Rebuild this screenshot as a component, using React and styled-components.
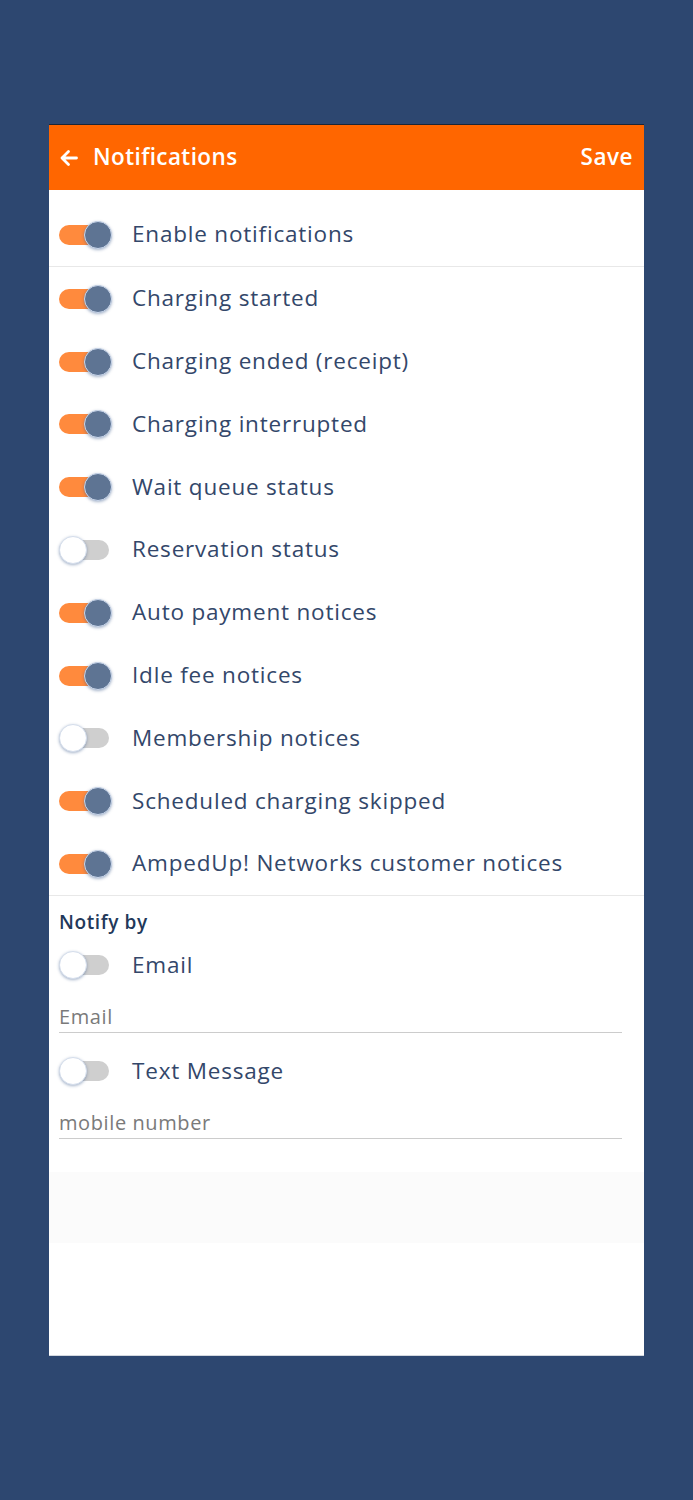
import React, { useState } from 'react';
import styled, { createGlobalStyle } from 'styled-components';

const GlobalStyle = createGlobalStyle`
  html, body {
    margin: 0;
    padding: 0;
    background: #2d4770;
  }
  body {
    font-family: "Open Sans", Lato, sans-serif;
  }
`;

const Page = styled.div`
  min-height: 1500px;
  padding-top: 124px;
  box-sizing: border-box;
`;

const Card = styled.div`
  margin-left: 49px;
  width: 595px;
  height: 1232px;
  background: #ffffff;
  border-top: 1px solid #1c2536;
  border-bottom: 1px solid #d3d8df;
  box-sizing: border-box;
  display: flex;
  flex-direction: column;
`;

const Header = styled.div`
  height: 65px;
  background: #ff6600;
  display: flex;
  align-items: center;
  justify-content: space-between;
  padding: 0 11px 0 10px;
  color: #ffffff;
`;

const TitleGroup = styled.div`
  display: flex;
  align-items: center;
  gap: 15px;
`;

const Title = styled.span`
  font-size: 22.5px;
  font-weight: 600;
  letter-spacing: 0.4px;
  line-height: 1;
`;

const SaveButton = styled.button`
  background: none;
  border: none;
  color: #ffffff;
  font-family: inherit;
  font-size: 22.5px;
  font-weight: 600;
  letter-spacing: 0.5px;
  line-height: 1;
  padding: 0;
  cursor: pointer;
`;

const List = styled.div`
  display: flex;
  flex-direction: column;
  padding-top: ${p => p.$top || 0}px;
  border-bottom: 1px solid #e8e8e8;
`;

const Row = styled.div`
  height: ${p => p.$h || 62.8}px;
  display: flex;
  align-items: center;
  gap: 20px;
  padding-left: 10px;
  margin-top: ${p => p.$mt || 0}px;
`;

const Label = styled.span`
  font-size: 22.5px;
  line-height: 1;
  color: #33476a;
  letter-spacing: 0.8px;
`;

const Track = styled.div`
  position: relative;
  width: 53px;
  height: 27px;
  flex-shrink: 0;
  cursor: pointer;

  &::before {
    content: '';
    position: absolute;
    left: 0;
    top: 4px;
    width: 50px;
    height: 20px;
    border-radius: 10px;
    background: ${p => (p.$on ? '#ff8a3d' : '#cfcfcf')};
  }
`;

const Thumb = styled.div`
  position: absolute;
  top: 0;
  left: ${p => (p.$on ? 25 : 0)}px;
  width: 26px;
  height: 26px;
  border-radius: 50%;
  background: ${p => (p.$on ? '#5e7493' : '#ffffff')};
  border: 1px solid ${p => (p.$on ? '#c9d6ea' : '#d5deec')};
  box-shadow: 0 1px 3px rgba(60, 90, 140, 0.45);
`;

const Section = styled.div`
  display: flex;
  flex-direction: column;
`;

const SectionTitle = styled.div`
  font-size: 19px;
  font-weight: 600;
  color: #22385a;
  letter-spacing: 0.6px;
  line-height: 24px;
  padding: 14px 0 0 10px;
`;

const Input = styled.input`
  margin-left: 10px;
  width: 563px;
  height: 37px;
  box-sizing: border-box;
  border: none;
  border-bottom: 1.5px solid #cccccc;
  padding: 6px 0 0;
  font-family: inherit;
  font-size: 20px;
  letter-spacing: 0.6px;
  color: #333;
  outline: none;
  background: transparent;

  &::placeholder {
    color: #7a7a7a;
  }
`;

const Footer = styled.div`
  margin-top: 33px;
  height: 71px;
  background: #fbfbfb;
`;

const Toggle = ({ on, onClick }) => (
  <Track $on={on} onClick={onClick}>
    <Thumb $on={on} />
  </Track>
);

const BackArrow = () => (
  <svg width="19" height="18" viewBox="0 0 19 18" fill="none">
    <path d="M17.5 9H3M9.5 2.5L3 9l6.5 6.5" stroke="#fff" strokeWidth="2.8" strokeLinecap="round" strokeLinejoin="round" />
  </svg>
);

const initialItems = [
  { label: 'Charging started', on: true },
  { label: 'Charging ended (receipt)', on: true },
  { label: 'Charging interrupted', on: true },
  { label: 'Wait queue status', on: true },
  { label: 'Reservation status', on: false },
  { label: 'Auto payment notices', on: true },
  { label: 'Idle fee notices', on: true },
  { label: 'Membership notices', on: false },
  { label: 'Scheduled charging skipped', on: true },
  { label: 'AmpedUp! Networks customer notices', on: true },
];

export default function App() {
  const [enabled, setEnabled] = useState(true);
  const [items, setItems] = useState(initialItems);
  const [email, setEmail] = useState(false);
  const [sms, setSms] = useState(false);

  const flip = i => setItems(items.map((it, j) => (j === i ? { ...it, on: !it.on } : it)));

  return (
    <Page>
      <GlobalStyle />
      <Card>
        <Header>
          <TitleGroup>
            <BackArrow />
            <Title>Notifications</Title>
          </TitleGroup>
          <SaveButton>Save</SaveButton>
        </Header>

        <List $top={12}>
          <Row $h={64}>
            <Toggle on={enabled} onClick={() => setEnabled(!enabled)} />
            <Label>Enable notifications</Label>
          </Row>
        </List>

        <List>
          {items.map((it, i) => (
            <Row key={it.label}>
              <Toggle on={it.on} onClick={() => flip(i)} />
              <Label>{it.label}</Label>
            </Row>
          ))}
        </List>

        <Section>
          <SectionTitle>Notify by</SectionTitle>
          <Row $h={62}>
            <Toggle on={email} onClick={() => setEmail(!email)} />
            <Label>Email</Label>
          </Row>
          <Input placeholder="Email" />
          <Row $h={62} $mt={7}>
            <Toggle on={sms} onClick={() => setSms(!sms)} />
            <Label>Text Message</Label>
          </Row>
          <Input placeholder="mobile number" />
        </Section>

        <Footer />
      </Card>
    </Page>
  );
}
